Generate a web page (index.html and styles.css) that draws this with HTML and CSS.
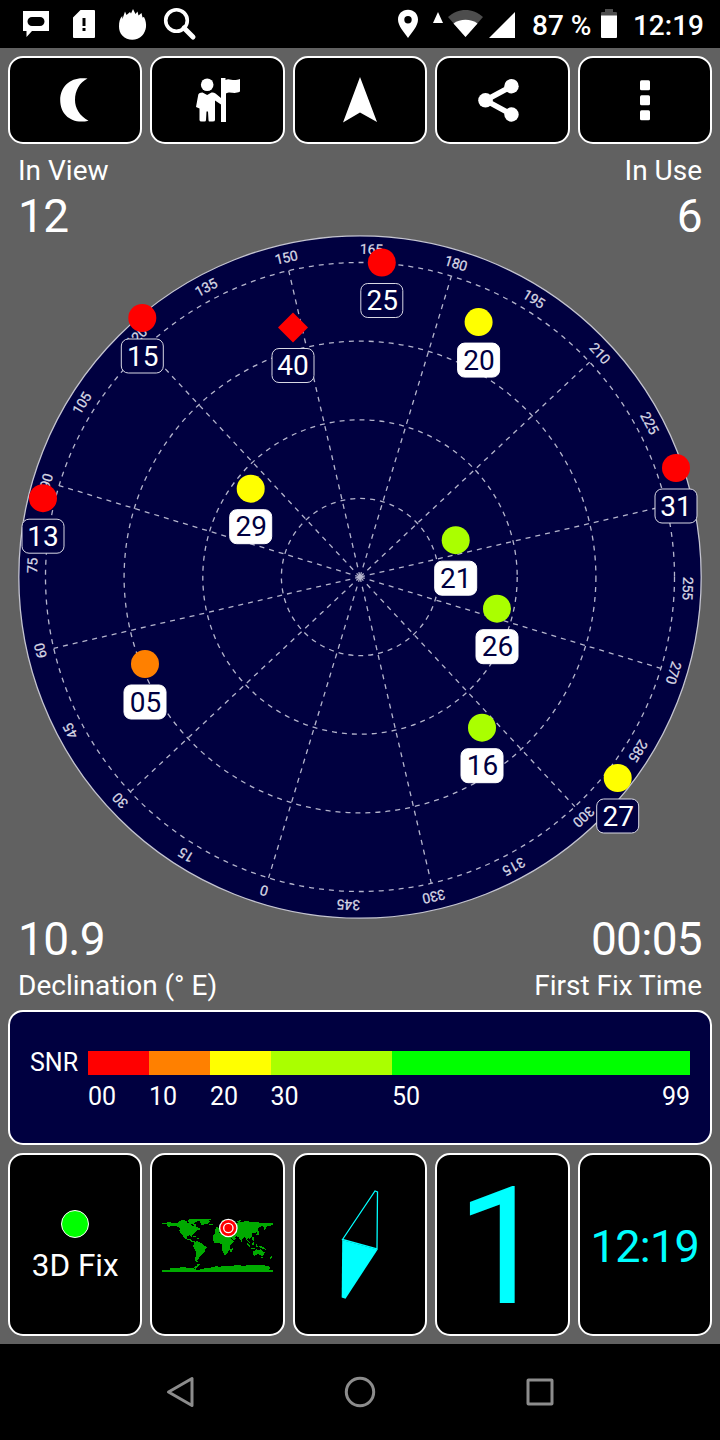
FILE: index.html
```html
<!DOCTYPE html>
<html lang="en">
<head>
<meta charset="utf-8">
<title>GPS Status</title>
<link rel="stylesheet" href="styles.css">
</head>
<body>
<header class="status">
  <svg class="status-left" viewBox="0 0 210 48">
    <path fill-rule="evenodd" d="M23 11H49V31H32L26.500 37V31H23ZM32 17a4 4 0 0 0 0 9H40a4 4 0 0 0 0-9Z"/>
    <path fill-rule="evenodd" d="M80.500 10H94a1 1 0 0 1 1 1V37a1 1 0 0 1-1 1H74a1 1 0 0 1-1-1V17.500ZM82.500 18V26H85.500V18ZM82.500 28V31H85.500V28Z"/>
    <path d="M119 26.500C119 22 119.800 18.500 122.200 16L122.500 19L125 11.500L126.500 15L130 12L131 13.500L133 9L135.500 14L137.500 11.500L138.500 15.500L141.500 13L142.500 17.500L144 17C147.500 24 146.500 31 142 35.800C137 41 127.500 41 122.500 35.800C120 33 119 30 119 26.500Z"/>
    <g class="stroke"><circle cx="176.500" cy="20.500" r="10.800" stroke-width="3.600"/><path d="M184 28L193 37" stroke-width="5" stroke-linecap="round"/></g>
  </svg>
  <svg class="status-right" viewBox="390 0 136 48">
    <path fill-rule="evenodd" d="M408 9.700C402 9.700 398 14 398 19.500C398 26 404 32 408 38C412 32 418 26 418 19.500C418 14 414 9.700 408 9.700ZM408 16a3.700 3.700 0 1 1 0 7.400a3.700 3.700 0 1 1 0-7.400Z"/>
    <path d="M438 12L443 23H433Z"/>
    <path class="dim" d="M448 17C458 7.500 473 7.500 483 17L465.500 37Z"/>
    <path d="M453.500 23.500C460 18.500 471 18.500 477.500 23.500L465.500 37Z"/>
    <path d="M515 12V38H489Z"/>
  </svg>
  <span class="battery-text">87 %</span>
  <svg class="battery" viewBox="601 0 16 48">
    <path class="dim" d="M605 9H613V12H616Q617 12 617 13V16H601V13Q601 12 602 12H605Z"/>
    <path d="M601 15.500H617V37Q617 38 616 38H602Q601 38 601 37Z"/>
  </svg>
  <span class="clock">12:19</span>
</header>

<main class="app">
  <nav class="toolbar">
    <button class="tile" aria-label="Night mode"><svg viewBox="53 78 44 44"><path d="M87.500 78.600C72 76 60.200 85.500 60.200 100C60.200 115 72 124.500 88.500 120.700C79.500 116 75 108 75 100C75 91 79.500 82.500 87.500 78.600Z"/></svg></button>
    <button class="tile" aria-label="Guide"><svg viewBox="195.500 78 44 44"><circle cx="206.700" cy="84.800" r="6.300"/><path d="M220.500 78H225V80C229 77.500 232 82 239.500 79V91.500C233 95 230 90.500 225.500 93.500V122H220.500V104.500L214.500 100.500V120Q214.500 121.500 212 121.500H209Q208 121.500 208 120L207.500 111.500H206L205.500 120Q205.500 121.500 204 121.500H201Q199 121.500 199 120V108.500L195.500 107L197.800 94.500Q198.500 92.500 202 92.500L206.700 95L211 92.500Q213 92 215 93.500L220.500 98Z"/></svg></button>
    <button class="tile" aria-label="Navigate"><svg viewBox="338 78 44 44"><path d="M360 77L377 122L360 112.500L343 122.500Z"/></svg></button>
    <button class="tile" aria-label="Share"><svg viewBox="480.500 78 44 44"><circle cx="486" cy="100.300" r="7.300"/><circle cx="512" cy="86.200" r="7.200"/><circle cx="512" cy="114.500" r="7.200"/><path d="M512 86.200L486 100.300L512 114.500" fill="none" stroke="#fff" stroke-width="5.500"/></svg></button>
    <button class="tile" aria-label="More"><svg viewBox="623 78 44 44"><rect x="640" y="80.300" width="10" height="10" rx="1.500"/><rect x="640" y="95.200" width="10" height="10" rx="1.500"/><rect x="640" y="110.200" width="10" height="10" rx="1.500"/></svg></button>
  </nav>

  <section class="readouts">
    <div class="readout"><span class="caption">In View</span><span class="value">12</span></div>
    <div class="readout end"><span class="caption">In Use</span><span class="value">6</span></div>
  </section>

  <svg class="sky" viewBox="0 235 720 684">
    <circle class="disc" cx="360" cy="577" r="341.200"/>
    <g class="grid">
      <circle cx="360" cy="577" r="78.600"/><circle cx="360" cy="577" r="157.200"/>
      <circle cx="360" cy="577" r="235.900"/><circle cx="360" cy="577" r="314.500"/>
      <path d="M360 577V262.500" transform="rotate(16.900 360 577)"/>
      <path d="M360 577V262.500" transform="rotate(46.900 360 577)"/>
      <path d="M360 577V262.500" transform="rotate(76.900 360 577)"/>
      <path d="M360 577V262.500" transform="rotate(106.900 360 577)"/>
      <path d="M360 577V262.500" transform="rotate(136.900 360 577)"/>
      <path d="M360 577V262.500" transform="rotate(166.900 360 577)"/>
      <path d="M360 577V262.500" transform="rotate(196.900 360 577)"/>
      <path d="M360 577V262.500" transform="rotate(226.900 360 577)"/>
      <path d="M360 577V262.500" transform="rotate(256.900 360 577)"/>
      <path d="M360 577V262.500" transform="rotate(286.900 360 577)"/>
      <path d="M360 577V262.500" transform="rotate(316.900 360 577)"/>
      <path d="M360 577V262.500" transform="rotate(346.900 360 577)"/>
    </g>
    <g class="azimuth">
      <text x="360.500" y="254" transform="rotate(196.900 360 577)">0</text>
      <text x="360.500" y="254" transform="rotate(211.900 360 577)">15</text>
      <text x="360.500" y="254" transform="rotate(226.900 360 577)">30</text>
      <text x="360.500" y="254" transform="rotate(241.900 360 577)">45</text>
      <text x="360.500" y="254" transform="rotate(256.900 360 577)">60</text>
      <text x="360.500" y="254" transform="rotate(271.900 360 577)">75</text>
      <text x="360.500" y="254" transform="rotate(286.900 360 577)">90</text>
      <text x="360.500" y="254" transform="rotate(301.900 360 577)">105</text>
      <text x="360.500" y="254" transform="rotate(316.900 360 577)">120</text>
      <text x="360.500" y="254" transform="rotate(331.900 360 577)">135</text>
      <text x="360.500" y="254" transform="rotate(346.900 360 577)">150</text>
      <text x="360.500" y="254" transform="rotate(1.900 360 577)">165</text>
      <text x="360.500" y="254" transform="rotate(16.900 360 577)">180</text>
      <text x="360.500" y="254" transform="rotate(31.900 360 577)">195</text>
      <text x="360.500" y="254" transform="rotate(46.900 360 577)">210</text>
      <text x="360.500" y="254" transform="rotate(61.900 360 577)">225</text>
      <text x="360.500" y="254" transform="rotate(91.900 360 577)">255</text>
      <text x="360.500" y="254" transform="rotate(106.900 360 577)">270</text>
      <text x="360.500" y="254" transform="rotate(121.900 360 577)">285</text>
      <text x="360.500" y="254" transform="rotate(136.900 360 577)">300</text>
      <text x="360.500" y="254" transform="rotate(151.900 360 577)">315</text>
      <text x="360.500" y="254" transform="rotate(166.900 360 577)">330</text>
      <text x="360.500" y="254" transform="rotate(181.900 360 577)">345</text>
    </g>
    <g class="sat seen" transform="translate(142.300 318)"><circle class="red" r="14"/><rect x="-21" y="21" width="42" height="34" rx="7"/><text x=".5" y="47.700">15</text></g>
    <g class="sat seen" transform="translate(381.800 262.500)"><circle class="red" r="14"/><rect x="-21" y="21" width="42" height="34" rx="7"/><text x=".5" y="47.300">25</text></g>
    <g class="sat seen" transform="translate(293 327.500)"><path class="red" d="M0-15L15 0L0 15L-15 0Z"/><rect x="-21" y="21" width="42" height="34" rx="7"/><text y="47.300">40</text></g>
    <g class="sat used" transform="translate(478.600 322.100)"><circle class="yellow" r="14"/><rect x="-21" y="21" width="42" height="34" rx="7"/><text x=".5" y="47.700">20</text></g>
    <g class="sat used" transform="translate(250.700 488.700)"><circle class="yellow" r="14"/><rect x="-21" y="21" width="42" height="34" rx="7"/><text x=".5" y="46.900">29</text></g>
    <g class="sat seen" transform="translate(43 498.200)"><circle class="red" r="14"/><rect x="-21" y="21" width="42" height="34" rx="7"/><text y="47.600">13</text></g>
    <g class="sat seen" transform="translate(676 468)"><circle class="red" r="14"/><rect x="-21" y="21" width="42" height="34" rx="7"/><text y="47.500">31</text></g>
    <g class="sat used" transform="translate(455.700 540.200)"><circle class="lime" r="14"/><rect x="-21" y="21" width="42" height="34" rx="7"/><text y="47.500">21</text></g>
    <g class="sat used" transform="translate(497 608.700)"><circle class="lime" r="14"/><rect x="-21" y="21" width="42" height="34" rx="7"/><text x=".5" y="47">26</text></g>
    <g class="sat used" transform="translate(145 664)"><circle class="orange" r="14"/><rect x="-21" y="21" width="42" height="34" rx="7"/><text x=".5" y="47.700">05</text></g>
    <g class="sat used" transform="translate(482 727.700)"><circle class="lime" r="14"/><rect x="-21" y="21" width="42" height="34" rx="7"/><text x=".5" y="47">16</text></g>
    <g class="sat seen" transform="translate(617.700 778)"><circle class="yellow" r="14"/><rect x="-21" y="21" width="42" height="34" rx="7"/><text x=".5" y="47.700">27</text></g>
  </svg>

  <section class="readouts lower">
    <div class="readout"><span class="value">10.9</span><span class="caption">Declination (° E)</span></div>
    <div class="readout end"><span class="value">00:05</span><span class="caption">First Fix Time</span></div>
  </section>

  <section class="snr">
    <span class="snr-title">SNR</span>
    <div class="scale">
      <i class="red"></i><i class="orange"></i><i class="yellow"></i><i class="lime"></i><i class="green"></i>
      <span>00</span><span>10</span><span>20</span><span>30</span><span class="ends"><b>50</b><b>99</b></span>
    </div>
  </section>

  <section class="widgets">
    <div class="tile fix"><span class="fix-dot"></span><span>3D Fix</span></div>
    <div class="tile">
      <svg class="map" viewBox="36 48 333 174" shape-rendering="crispEdges">
        <g class="land">
          <path d="M36 70H50V67H64V70H80L88 65L96 67L105 64L115 70L124 68V75L132 80L136 75L141 82L149 84L151 89L139 92L134 98L128 103L126 108L124 112L120 106L112 108L110 114L115 118L120 115L123 119L128 123L134 124L133 127L125 126L118 120L107 118L101 112L97 105L92 100L88 92L90 85L84 80L76 78H64L57 82L54 79H50V73H38Z"/>
          <path d="M84 64L100 60L113 63L111 67H98ZM118 58H149V61L143 62L137 67L130 71L140 74L139 79L132 76L120 69L113 63Z"/>
          <path d="M142 58L149 56H183V60L176 62L180 66L174 71H164L159 76L153 73L149 64L143 61Z"/>
          <path d="M128 109H139V112H130ZM141 113H147V116H141Z"/>
          <path d="M134 126L143 123L153 129L159 135L169 139L171 143L166 148L164 156L157 161L153 168L147 172L145 177L142 179L143 186H137L135 177L138 167L137 154L133 146L129 140Z"/>
          <path d="M190 105L196 99L205 97L213 101H234L241 107L244 118L252 123L247 130L241 137L240 149L234 156L230 163L224 165L219 158L216 145L217 137L213 131L202 129L193 128L188 119Z"/>
          <path d="M241 147L248 145L247 154L244 158L241 154Z"/>
          <path d="M194 94L204 91L201 85L207 82L209 75L218 67L230 65L243 70L254 67L262 70L271 65L281 65L290 62L301 67H325L333 70H352V68H369V73L364 75V79H352L348 84L344 91L340 84L345 80L334 79L325 83L323 93L316 99L307 98L306 108L299 116L295 113L292 119L299 127L302 134L298 130L290 121L288 114L283 112L275 119V126L270 119L267 112L258 109L254 111L260 115L251 121L246 116L241 108L231 105L224 97L215 98L210 94L203 98L194 100Z"/>
          <path d="M197 82H203V92H196Z"/>
          <path d="M178 71H190V76H178ZM216 60L229 59V64H219ZM261 64L272 59V62L266 68ZM321 93H326V104L317 107L320 101ZM307 111H311V123L307 119ZM290 128L301 138L300 142L293 135ZM302 143H314V146H302ZM305 129L312 126V136H305ZM317 134L321 131V136L325 141L318 140ZM325 138L332 137L344 144L347 149L337 147Z"/>
          <path d="M309 154L320 148L327 150L333 146L336 153L344 157L343 164L337 169L331 165L323 162L314 167L308 163ZM333 171H338V175H333ZM357 174L363 168L366 166V171L360 177Z"/>
          <path d="M143 190L149 193L145 200L138 207L130 204L135 198H140ZM36 211H53L62 207L57 204H81L99 201L119 205H131L139 210L149 209L165 205L176 204L196 199L210 200L228 197H249L273 194V198L292 196H342L355 199L361 203L357 209H369V216H36Z"/>
        </g>
        <g shape-rendering="geometricPrecision"><circle cx="235" cy="84" r="28" fill="#fff"/><circle cx="235" cy="84" r="24" fill="#f00"/><circle cx="235" cy="84" r="14" fill="#f00" stroke="#fff" stroke-width="4"/></g>
      </svg>
    </div>
    <div class="tile">
      <svg class="compass" viewBox="340 1189 40 112"><path d="M342.500 1239.500L375 1191L377.500 1192L377 1249Z" fill="none" stroke="#0ff" stroke-width="1.300"/><path fill="#0ff" d="M342.200 1240L377.700 1249.500L345.500 1298.700L341.700 1297.500Z"/></svg>
    </div>
    <div class="tile"><span class="big">1</span></div>
    <div class="tile"><span class="time">12:19</span></div>
  </section>
</main>

<footer class="nav">
  <svg viewBox="150 1344 420 96">
    <path d="M192 1378.500V1405.500L168.500 1392Z" stroke-linejoin="round"/>
    <circle cx="360" cy="1392" r="13.700"/>
    <rect x="528" y="1380" width="24" height="24" rx=".5"/>
  </svg>
</footer>
</body>
</html>
```
FILE: styles.css
```css
* { box-sizing: border-box; }
body {
  margin: 0;
  width: 720px;
  height: 1440px;
  display: flex;
  flex-direction: column;
  background: #000;
  color: #fff;
  font-family: Roboto, "Liberation Sans", sans-serif;
  overflow: hidden;
}
svg { display: block; fill: #fff; overflow: visible; }

.status {
  flex: none;
  height: 48px;
  display: flex;
  align-items: center;
  padding-right: 16px;
  font-size: 28px;
  font-weight: 500;
  line-height: 48px;
  white-space: nowrap;
}
.status-left { width: 210px; height: 48px; margin-right: auto; }
.status-right { width: 136px; height: 48px; margin-right: 7px; }
.stroke { fill: none; stroke: #fff; }
.dim { fill: #4d4d4d; }
.battery { width: 16px; height: 48px; margin: 0 16px 0 10px; }
.status span { padding-top: 3px; }
.battery-text, .clock { margin-left: -.5px; }

.app {
  flex: none;
  height: 1296px;
  display: flex;
  flex-direction: column;
  background: #616161;
}
.toolbar { display: flex; gap: 8px; padding: 8px 8px 0; }
.tile {
  flex: 1 1 0;
  min-width: 0;
  display: flex;
  align-items: center;
  justify-content: center;
  padding: 0;
  background: #000;
  border: 2px solid #fff;
  border-radius: 15px;
}
.toolbar .tile { height: 88px; }
.toolbar svg { width: 44px; height: 44px; }

.readouts {
  display: flex;
  justify-content: space-between;
  height: 91px;
  padding: 10px 18px 0;
}
.readouts.lower { height: 91px; padding-top: 0; }
.readout { display: flex; flex-direction: column; }
.end { align-items: flex-end; }
.caption { font-size: 28px; line-height: 34px; }
.value { font-size: 46px; line-height: 56px; letter-spacing: -.7px; }
.lower .value { line-height: 41px; }
.lower .caption { margin-top: 9px; }

.sky { width: 720px; height: 684px; flex: none; }
.disc { fill: #000040; stroke: #c4c4d0; stroke-width: 1.3; }
.grid { fill: none; stroke: #b4b4cc; stroke-width: 1.3; stroke-dasharray: 5 5; }
.azimuth { fill: #d8d8e4; font-size: 14px; letter-spacing: -.3px; text-anchor: middle; stroke: #d8d8e4; stroke-width: .25; }
.sat text { font-size: 28px; text-anchor: middle; }
.seen rect { fill: #000040; stroke: #d8d8e4; }
.seen text { fill: #fff; }
.used rect { fill: #fff; stroke: #fff; }
.used text { fill: #000040; }
.red { fill: #f00; background: #f00; }
.orange { fill: #ff8000; background: #ff8000; }
.yellow { fill: #ff0; background: #ff0; }
.lime { fill: #af0; background: #af0; }
.green { background: #0f0; }

.snr {
  height: 135px;
  margin: 0 8px;
  padding: 39px 20px 0;
  display: flex;
  background: #000040;
  border: 2px solid #fff;
  border-radius: 15px;
  font-size: 25px;
}
.snr-title { width: 58px; line-height: 23px; }
.scale {
  flex: 1;
  display: grid;
  grid-template-columns: 61px 61px 60.5px 121.5px 1fr;
  grid-template-rows: 24px 40px;
  line-height: 43px;
}
.ends { display: flex; justify-content: space-between; }
.ends b { font-weight: 400; }

.widgets { display: flex; gap: 8px; height: 183px; margin: 8px 8px 0; }
.fix { flex-direction: column; font-size: 31.5px; gap: 10px; padding-top: 4px; }
.fix-dot { width: 28px; height: 28px; border-radius: 50%; background: #0f0; border: 1.5px solid #fff; }
.fix span:last-child { line-height: 36px; }
.map { width: 111px; height: 58px; }
.land { fill: #0a0; }
.compass { width: 40px; height: 112px; }
.big, .time { color: #0ff; }
.big { font-size: 164px; line-height: 180px; padding-top: 4px; }
.time { font-size: 45px; letter-spacing: -.7px; padding-top: 4px; }

.nav { flex: none; height: 96px; display: flex; justify-content: center; }
.nav svg { width: 420px; height: 96px; fill: none; stroke: #8c8c8c; stroke-width: 3; }
```
